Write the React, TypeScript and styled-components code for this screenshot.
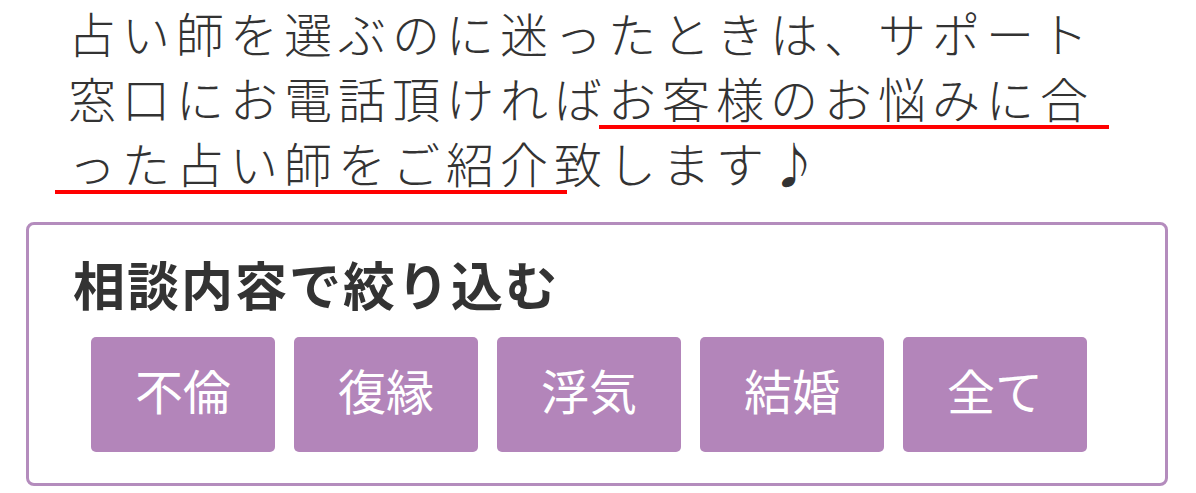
import React from "react";
import styled, { createGlobalStyle } from "styled-components";

const GlobalStyle = createGlobalStyle`
  html, body {
    margin: 0;
    padding: 0;
    background: #ffffff;
  }
  body {
    font-family: "Noto Sans CJK JP", "Noto Sans", sans-serif;
    color: #333333;
  }
`;

const Page = styled.div`
  display: flex;
  flex-direction: column;
  padding: 0 28px 0 26px;
  width: 1196px;
  box-sizing: border-box;
`;

const Lead = styled.p`
  margin: 0;
  padding-left: 42px;
  font-size: 48px;
  line-height: 65px;
  letter-spacing: 6px;
  font-weight: 300;
  color: #333333;
  white-space: nowrap;
`;

const Marked = styled.span<{ $left: number; $right: number }>`
  position: relative;
  &::after {
    content: "";
    position: absolute;
    left: ${(p) => p.$left}px;
    right: ${(p) => p.$right}px;
    bottom: 3px;
    height: 4px;
    background: #ff0000;
  }
`;

const FilterBox = styled.section`
  margin-top: 27px;
  border: 3px solid #b48cbd;
  border-radius: 8px;
  padding: 33px 0 31px 44px;
  display: flex;
  flex-direction: column;
  gap: 27px;
  height: 264px;
  box-sizing: border-box;
`;

const FilterTitle = styled.h2`
  margin: 0;
  font-size: 52px;
  line-height: 52px;
  font-weight: 700;
  letter-spacing: 2px;
  color: #333333;
`;

const ButtonRow = styled.div`
  display: flex;
  gap: 19px;
  padding-left: 18px;
`;

const TagButton = styled.button`
  width: 184px;
  height: 115px;
  border: none;
  border-radius: 5px;
  background: #b385ba;
  color: #ffffff;
  font-family: "Noto Sans CJK JP", "Noto Sans", sans-serif;
  font-size: 48px;
  font-weight: 400;
  display: flex;
  align-items: center;
  justify-content: center;
  padding: 0 0 12px 0;
  cursor: pointer;
`;

const tags = ["不倫", "復縁", "浮気", "結婚", "全て"];

export default function App() {
  return (
    <>
      <GlobalStyle />
      <Page>
        <Lead>
          占い師を選ぶのに迷ったときは、サポート
          <br />
          窓口にお電話頂ければ
          <Marked $left={-9} $right={-15}>お客様のお悩みに合</Marked>
          <br />
          <Marked $left={-13} $right={-13}>った占い師をご紹介</Marked>
          致します♪
        </Lead>
        <FilterBox>
          <FilterTitle>相談内容で絞り込む</FilterTitle>
          <ButtonRow>
            {tags.map((t) => (
              <TagButton key={t}>{t}</TagButton>
            ))}
          </ButtonRow>
        </FilterBox>
      </Page>
    </>
  );
}
